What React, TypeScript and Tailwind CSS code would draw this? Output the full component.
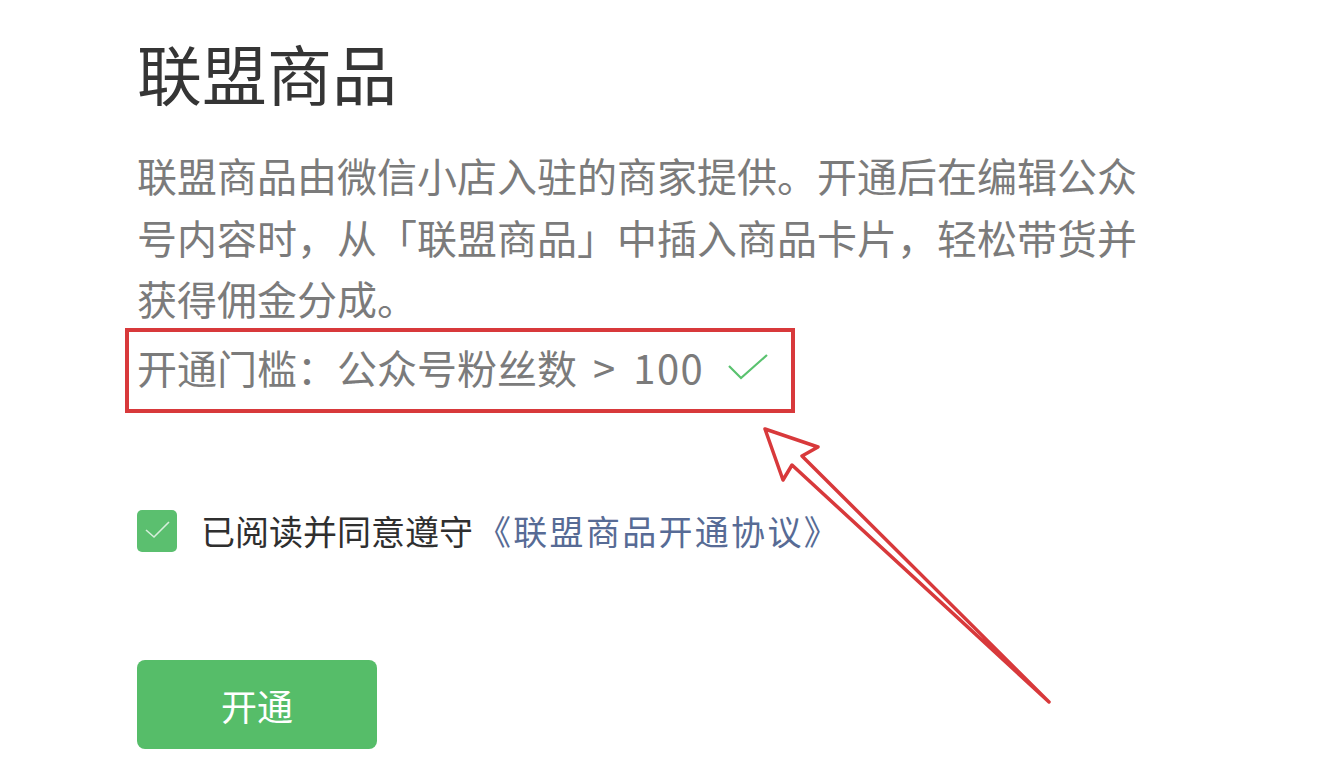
import React from "react";

export default function App() {
  return (
    <div
      className="relative w-[1322px] h-[774px] bg-white overflow-hidden"
      style={{ fontFamily: '"Noto Sans CJK SC", "Noto Sans", sans-serif' }}
    >
      <div className="flex flex-col items-start pl-[137px] pt-[40px]">
        <h1 className="text-[65px] leading-[64px] text-[#353535] font-normal">联盟商品</h1>
        <p className="mt-[41px] w-[1010px] text-[40px] leading-[61.5px] text-[#7b7b7b]">
          联盟商品由微信小店入驻的商家提供。开通后在编辑公众号内容时，从「联盟商品」中插入商品卡片，轻松带货并获得佣金分成。
        </p>
        <div className="relative mt-[7px] flex items-center h-[61.5px] text-[40px] leading-[61.5px] text-[#7b7b7b]">
          <span>开通门槛：公众号粉丝数</span>
          <span className="ml-[16px]">&gt;</span>
          <span className="ml-[18px] tracking-[1.5px]">100</span>
          <svg className="ml-[24px]" width="40" height="26" viewBox="0 0 40 26">
            <polyline points="1,12 13,24 39,1" fill="none" stroke="#5ac26f" strokeWidth="2.2" />
          </svg>
          <span className="absolute left-[-12px] top-[-9px] w-[670px] h-[85px] border-[4px] border-[#d8393b]" />
        </div>
        <div className="mt-[112px] flex items-center h-[42px]">
          <div className="w-[40px] h-[42px] rounded-[5px] bg-[#5bbf6f] flex items-center justify-center">
            <svg width="40" height="42" viewBox="0 0 40 42">
              <polyline points="9,20 17,27 32,12" fill="none" stroke="#ffffff" strokeOpacity="0.75" strokeWidth="1.6" />
            </svg>
          </div>
          <span className="ml-[24px] text-[34px] leading-[42px] text-[#2f2f2f]">已阅读并同意遵守</span>
          <span className="ml-[4px] text-[34px] leading-[42px] tracking-[2.3px] text-[#576b95]">《联盟商品开通协议》</span>
        </div>
        <button className="mt-[108px] w-[240px] h-[89px] rounded-[8px] bg-[#56bd69] text-white text-[36px] flex items-center justify-center">
          开通
        </button>
      </div>
      <svg className="absolute inset-0 pointer-events-none" width="1322" height="774" viewBox="0 0 1322 774">
        <polygon
          points="765,429 818,447 802,456 1049,702 792,465 783,480"
          fill="none"
          stroke="#d8393b"
          strokeWidth="3.5"
          strokeLinejoin="round"
        />
      </svg>
    </div>
  );
}
